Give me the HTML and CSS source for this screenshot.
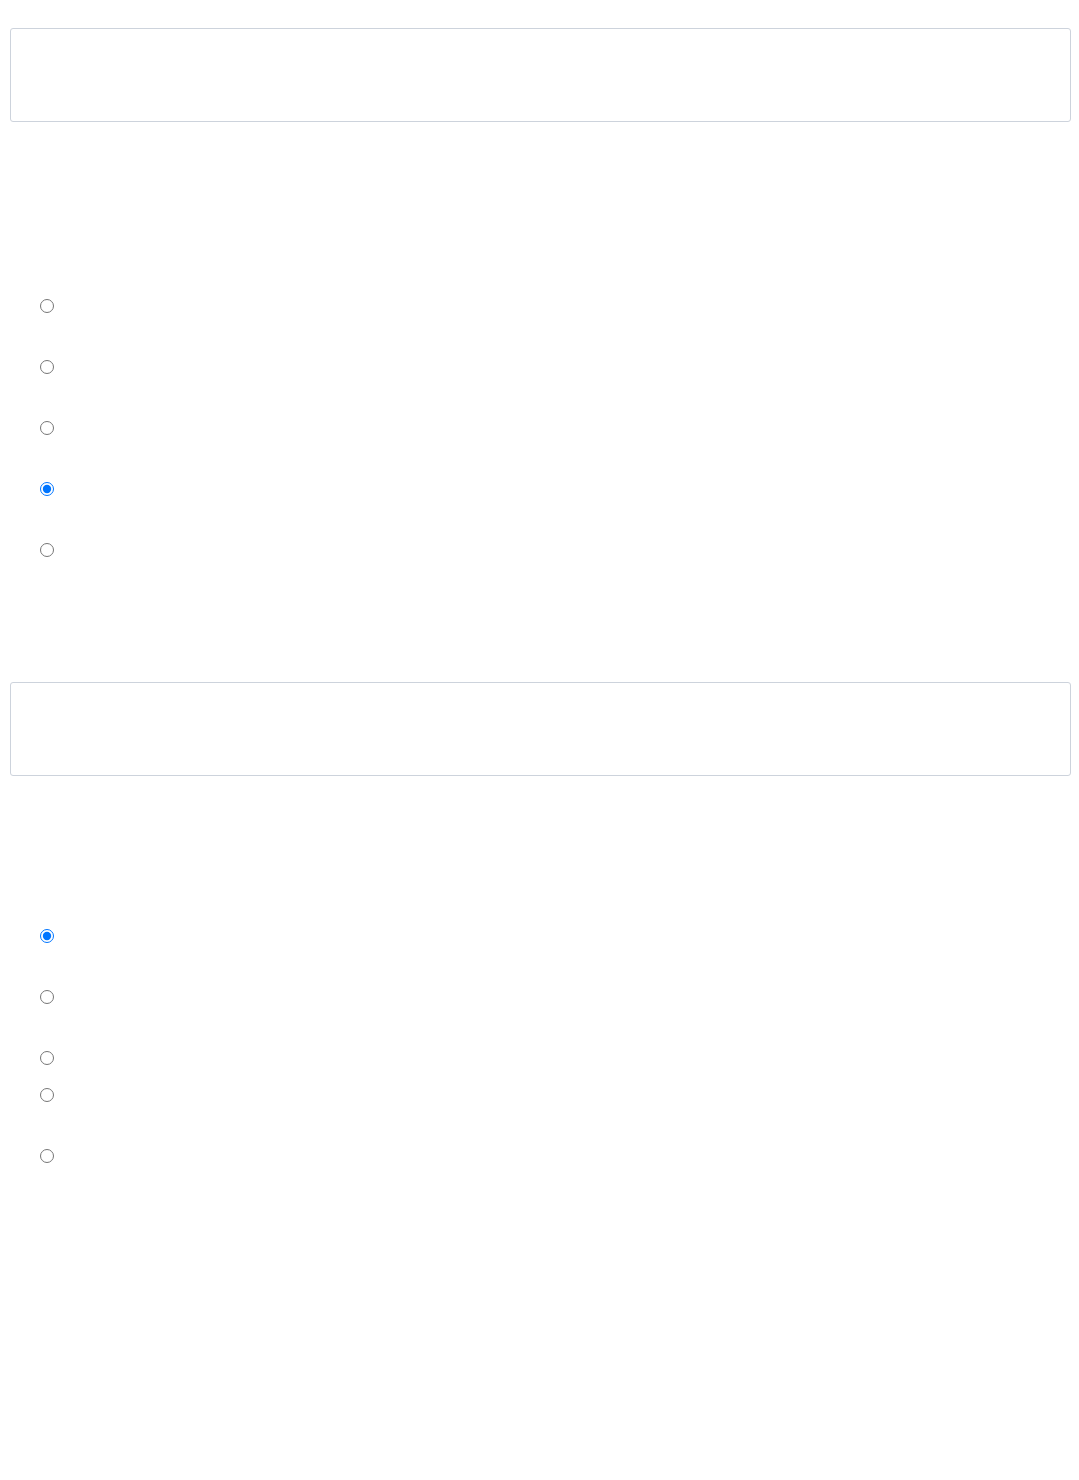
FILE: index.html
```html
<!DOCTYPE html>
<html lang="en">
<head>
<meta charset="utf-8">
<title>Form</title>
<link rel="stylesheet" href="styles.css">
</head>
<body>
<main class="page">
  <section class="question">
    <div class="prompt-box"></div>
    <div class="options options-first">
      <label class="option"><input type="radio" name="q1" value="a"></label>
      <label class="option"><input type="radio" name="q1" value="b"></label>
      <label class="option"><input type="radio" name="q1" value="c"></label>
      <label class="option"><input type="radio" name="q1" value="d" checked></label>
      <label class="option"><input type="radio" name="q1" value="e"></label>
    </div>
  </section>
  <section class="question question-second">
    <div class="prompt-box"></div>
    <div class="options options-second">
      <label class="option"><input type="radio" name="q2" value="a" checked></label>
      <label class="option"><input type="radio" name="q2" value="b"></label>
      <label class="option option-short"><input type="radio" name="q2" value="c"></label>
      <label class="option"><input type="radio" name="q2" value="d"></label>
      <label class="option"><input type="radio" name="q2" value="e"></label>
    </div>
  </section>
</main>
</body>
</html>
```
FILE: styles.css
```css
html, body {
  margin: 0;
  padding: 0;
  background: #ffffff;
  font-family: "Liberation Sans", Arial, sans-serif;
}

.page {
  padding: 28px 8px 0 10px;
}

.prompt-box {
  height: 94px;
  box-sizing: border-box;
  border: 1px solid #cdd3dc;
  border-radius: 3px;
  background: #ffffff;
}

.options {
  display: flex;
  flex-direction: column;
  padding-left: 30px;
}

.options-first {
  margin-top: 154px;
}

.question-second {
  margin-top: 101px;
}

.options-second {
  margin-top: 130px;
}

.option {
  display: flex;
  align-items: flex-start;
  height: 61px;
  box-sizing: border-box;
  padding-top: 23px;
}

.option-short {
  height: 37px;
}

.option input {
  width: 14px;
  height: 14px;
  margin: 0;
}
```
